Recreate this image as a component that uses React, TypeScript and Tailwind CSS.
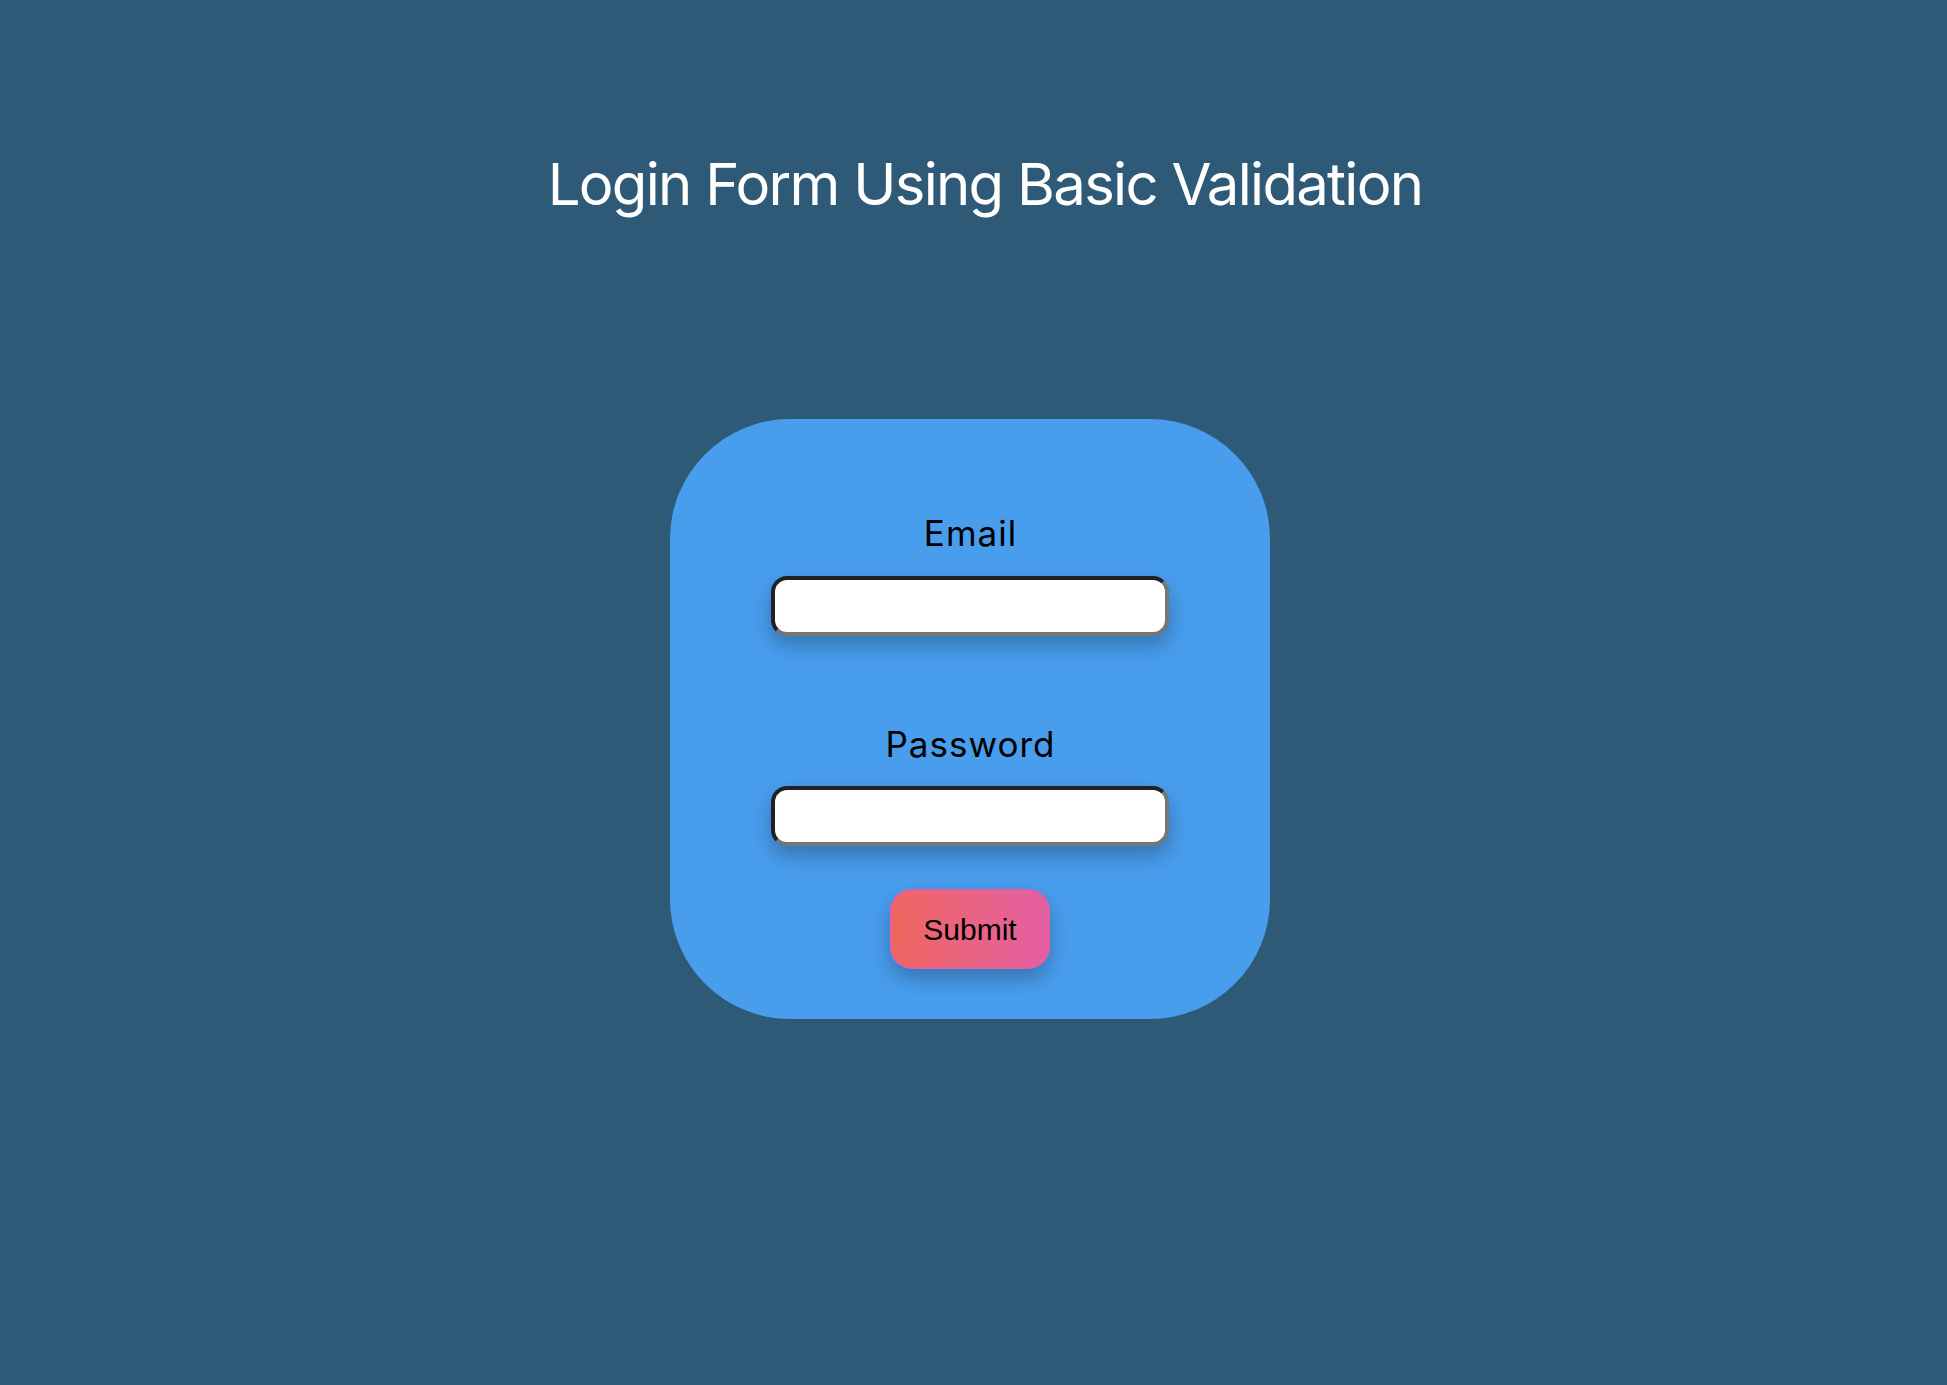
import { useState } from 'react';

export default function App() {
  const [email, setEmail] = useState('');
  const [password, setPassword] = useState('');

  const handleSubmit = (e: React.FormEvent) => {
    e.preventDefault();
    // basic validation only
    if (!email || !password) return;
  };

  return (
    <div className="min-h-screen w-full bg-[#2e5a77] flex flex-col items-center pr-[7px] font-['Inter',sans-serif]">
      <h1 className="mt-[149px] pl-[30px] text-[58px] leading-[70px] tracking-[-1.7px] font-normal text-white">
        Login Form Using Basic Validation
      </h1>

      <form
        onSubmit={handleSubmit}
        className="mt-[200px] w-[600px] h-[600px] rounded-[120px] bg-[#489ded] flex flex-col items-center pt-[94px]"
      >
        <label htmlFor="email" className="h-10 pl-[1px] text-[35px] leading-[40px] tracking-[1px] text-black">
          Email
        </label>
        <input
          id="email"
          type="email"
          value={email}
          onChange={(e) => setEmail(e.target.value)}
          className="mt-[23px] w-[398px] h-[60px] bg-white rounded-[16px] border-4 border-[#767676] [border-style:inset] shadow-[0_10px_20px_rgba(0,0,0,0.25)] outline-none px-3 text-2xl"
        />

        <label htmlFor="password" className="mt-[88px] h-10 pl-[1px] text-[35px] leading-[40px] tracking-[1px] text-black">
          Password
        </label>
        <input
          id="password"
          type="password"
          value={password}
          onChange={(e) => setPassword(e.target.value)}
          className="mt-[22px] w-[398px] h-[60px] bg-white rounded-[16px] border-4 border-[#767676] [border-style:inset] shadow-[0_10px_20px_rgba(0,0,0,0.25)] outline-none px-3 text-2xl"
        />

        <button
          type="submit"
          className="mt-[43px] w-[160px] h-[80px] rounded-[22px] border-2 border-[#e45ea2] bg-gradient-to-r from-[#ef665e] to-[#e45fa2] shadow-[0_10px_20px_rgba(0,0,0,0.25)] font-['Liberation_Sans',Arial,sans-serif] text-[30px] text-black"
        >
          Submit
        </button>
      </form>
    </div>
  );
}
